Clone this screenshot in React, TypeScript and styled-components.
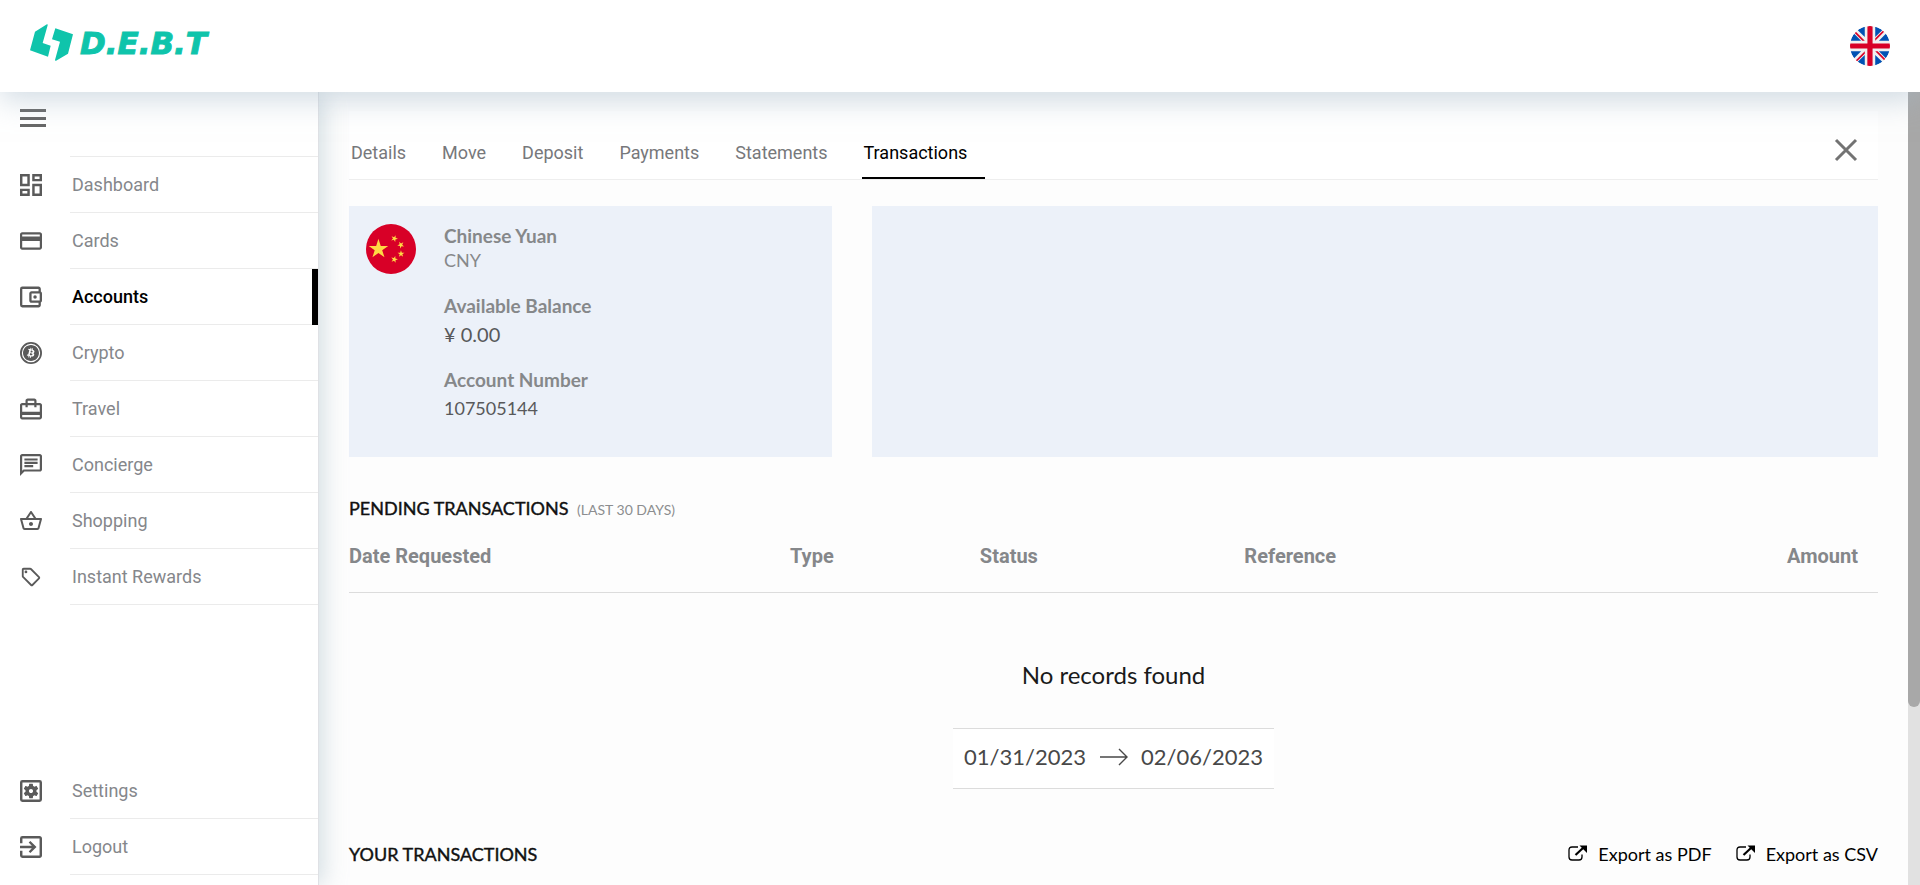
import React from 'react';
import styled, { createGlobalStyle, css } from 'styled-components';
import type { IconType } from 'react-icons';
import {
  MdOutlineDashboard,
  MdOutlineCreditCard,
  MdOutlineAccountBalanceWallet,
  MdCardTravel,
  MdOutlineChat,
  MdOutlineShoppingBasket,
  MdOutlineSell,
  MdOutlineSettingsApplications,
  MdExitToApp,
} from 'react-icons/md';
import { FaBitcoin } from 'react-icons/fa';

const GlobalStyle = createGlobalStyle`
  *, *::before, *::after { box-sizing: border-box; }
  body {
    margin: 0;
    background: #fdfdfd;
    font-family: Lato, "Liberation Sans", sans-serif;
    font-size: 18px;
    color: #111;
  }
  button, input { font: inherit; color: inherit; }
  a { color: inherit; text-decoration: none; }
`;

const roboto = css`font-family: Roboto, "Liberation Sans", sans-serif;`;

const Page = styled.div`
  display: flex;
  flex-direction: column;
  height: 100vh;
  overflow: hidden;
`;

const Header = styled.header`
  position: relative;
  z-index: 2;
  flex: none;
  display: flex;
  align-items: center;
  justify-content: space-between;
  height: 92px;
  padding: 0 30px;
  background: #fff;
  box-shadow: 0 8px 28px rgba(165, 186, 202, 0.5);
`;

const Brand = styled.a`
  display: flex;
  align-items: center;
  gap: 7px;
  padding-bottom: 8px;
  color: #0fc4ab;
`;

const BrandName = styled.span`
  padding-top: 2px;
  font: italic 700 31px/36px "DejaVu Sans", sans-serif;
  -webkit-text-stroke: 1px currentColor;
`;

const RoundButton = styled.button`
  display: block;
  width: 40px;
  height: 40px;
  padding: 0;
  border: 0;
  border-radius: 50%;
  background: none;
`;

const Body = styled.div`
  flex: 1;
  display: flex;
  min-height: 0;
`;

const Sidebar = styled.aside`
  position: relative;
  z-index: 1;
  flex: none;
  display: flex;
  flex-direction: column;
  width: 319px;
  padding-bottom: 10px;
  background: #fff;
  border-right: 1px solid #dfe1e5;
  box-shadow: 4px 0 22px rgba(160, 184, 196, 0.45);
`;

const MenuBar = styled.div`
  flex: none;
  height: 64px;
  padding: 17px 20px;
`;

const MenuButton = styled.button`
  display: flex;
  flex-direction: column;
  justify-content: space-between;
  width: 26px;
  height: 18px;
  padding: 0;
  border: 0;
  background: none;
`;

const MenuLine = styled.span`
  height: 3px;
  background: #666;
`;

const NavList = styled.ul<{ $topLine?: boolean }>`
  margin: 0;
  padding: 0;
  list-style: none;

  &::before {
    content: "";
    display: ${(p) => (p.$topLine ? 'block' : 'none')};
    height: 1px;
    margin-left: 70px;
    background: #ebebeb;
  }
`;

const Spacer = styled.div`flex: 1;`;

const NavLink = styled.a<{ $active?: boolean }>`
  ${roboto}
  display: flex;
  align-items: center;
  gap: 28px;
  height: 56px;
  padding-left: 20px;
  color: ${(p) => (p.$active ? '#000' : '#85878b')};
  font-weight: ${(p) => (p.$active ? 500 : 400)};
  border-right: ${(p) => (p.$active ? '6px solid #000' : '0')};

  svg { flex: none; width: 22px; height: 22px; color: #5a5a5a; }
`;

const NavLabel = styled.span`
  flex: 1;
  display: flex;
  align-items: center;
  height: 56px;
  padding-left: 2px;
  border-bottom: 1px solid #ebebeb;
`;

const Main = styled.main`
  flex: 1;
  min-width: 0;
  padding: 19px 30px 0;
  overflow: hidden;
`;

const TabBar = styled.nav`
  display: flex;
  align-items: stretch;
  gap: 32px;
  height: 69px;
  padding: 0 20px 0 0;
  background: #fff;
  border-bottom: 1px solid #eee;
`;

const Tab = styled.a<{ $active?: boolean }>`
  ${roboto}
  display: flex;
  align-items: flex-end;
  padding: 0 ${(p) => (p.$active ? '18px' : '2px')} 13px 2px;
  line-height: 22px;
  color: ${(p) => (p.$active ? '#000' : '#77787b')};
  border-bottom: 2px solid ${(p) => (p.$active ? '#000' : 'transparent')};
`;

const CloseButton = styled.button`
  align-self: center;
  display: block;
  width: 24px;
  height: 24px;
  margin: 10px 0 0 auto;
  padding: 0;
  border: 0;
  background: none;
`;

const Cards = styled.div`
  display: grid;
  grid-template-columns: 12fr 25fr;
  gap: 40px;
  margin-top: 26px;
`;

const Card = styled.section`
  display: flex;
  gap: 28px;
  min-height: 251px;
  padding: 17px;
  background: #ecf1f9;
`;

const FlagSlot = styled.div`
  flex: none;
  width: 50px;
  height: 50px;
  margin-top: 1px;
`;

const Facts = styled.dl`
  margin: 0;
  color: #86888a;
`;

const Fact = styled.div<{ $first?: boolean }>`
  margin-bottom: ${(p) => (p.$first ? 20 : 18)}px;
`;

const Term = styled.dt<{ $tight?: boolean }>`
  font-size: 19px;
  font-weight: 700;
  line-height: ${(p) => (p.$tight ? 25 : 28)}px;
`;

const Value = styled.dd<{ $dark?: boolean; $large?: boolean }>`
  margin: 0;
  font-size: ${(p) => (p.$large ? 20 : 18)}px;
  line-height: ${(p) => (p.$dark ? 28 : 24)}px;
  color: ${(p) => (p.$dark ? '#58595b' : '#86888a')};
`;

const SectionHead = styled.div`
  display: flex;
  align-items: center;
  justify-content: space-between;
`;

const SectionTitle = styled.h2`
  margin: 0;
  font-size: 18px;
  font-weight: 400;
  line-height: 22px;
  color: #111;
  -webkit-text-stroke: 0.4px currentColor;

  small { margin-left: 4px; font-size: 14px; color: #8c8d8f; -webkit-text-stroke: 0; }
`;

const PendingTitle = styled(SectionTitle)`
  margin-top: 40px;
`;

const Table = styled.table`
  ${roboto}
  width: 100%;
  table-layout: fixed;
  border-collapse: collapse;
  border-bottom: 1px solid #dcdcdc;
`;

const HeadCell = styled.th<{ $width?: string; $end?: boolean }>`
  width: ${(p) => p.$width ?? 'auto'};
  height: 71px;
  padding: 0 ${(p) => (p.$end ? '20px' : '0')} 0 0;
  text-align: ${(p) => (p.$end ? 'right' : 'left')};
  font-size: 20px;
  font-weight: 700;
  color: #85878a;
`;

const Empty = styled.p`
  margin: 67px 0 38px;
  text-align: center;
  font-size: 24px;
  line-height: 30px;
  color: #1a1a1a;
`;

const DateRange = styled.div`
  display: flex;
  align-items: center;
  justify-content: space-between;
  width: 321px;
  height: 61px;
  margin: 0 auto 54px;
  padding: 0 10px 3px;
  background: #fff;
  border: solid #dcdcdc;
  border-width: 1px 0;
`;

const DateInput = styled.input`
  width: 124px;
  padding: 0;
  border: 0;
  outline: 0;
  background: none;
  text-align: center;
  font-size: 22px;
  color: #484848;
`;

const ExportGroup = styled.div`
  display: flex;
  gap: 24px;
`;

const ExportButton = styled.button`
  display: flex;
  align-items: center;
  gap: 11px;
  padding: 0;
  border: 0;
  background: none;
  line-height: 22px;
  color: #000;
`;

const ScrollTrack = styled.div`
  flex: none;
  width: 12px;
  background: #e1e1e1;
`;

const ScrollThumb = styled.div`
  height: calc(77% + 4px);
  background: #a8a8a8;
  border-radius: 0 0 6px 6px;
`;

const LogoMark = () => (
  <svg width="43" height="37" viewBox="0 0 129 111" aria-hidden="true">
    <path fill="currentColor" d="M52 0 L53 4 L38 57 L62 65 L54 98 L0 79 L15 23 Z" />
    <path fill="currentColor" d="M76 13 L129 31 L114 89 L77 111 L75 108 L90 53 L66 46 Z" />
  </svg>
);

const UkFlag = () => (
  <svg width="40" height="40" viewBox="0 0 512 512" aria-hidden="true">
    <clipPath id="uk"><circle cx="256" cy="256" r="256" /></clipPath>
    <g clipPath="url(#uk)">
      <path fill="#f0f0f0" d="M0 0h512v512H0z" />
      <path fill="#0052b4" d="M53 100C33 126 18 156 9 189h133zM503 189c-9-33-24-63-44-89l-89 89zM9 323c9 33 24 63 44 89l89-89zM412 53C386 33 356 18 323 9v133zM100 459c26 20 56 35 89 44V370zM189 9c-33 9-63 24-89 44l89 89zM323 503c33-9 63-24 89-44l-89-89zM370 323l89 89c20-26 35-56 44-89z" />
      <path fill="#d80027" d="M510 223H289V2a258 258 0 0 0-66 0v221H2a258 258 0 0 0 0 66h220v221a258 258 0 0 0 67 0V289h221a258 258 0 0 0 0-66z" />
      <path fill="#d80027" d="M323 323l114 114c5-5 10-11 15-16l-98-98zM189 323L75 437c5 5 11 10 16 15l98-98zM189 189L75 75c-5 5-10 11-15 16l98 98zM323 189L437 75c-5-5-11-10-16-15l-98 98z" />
    </g>
  </svg>
);

const ChinaFlag = () => (
  <svg width="50" height="50" viewBox="0 0 512 512" role="img" aria-label="China">
    <circle cx="256" cy="256" r="256" fill="#d80027" />
    <g fill="#ffda44">
      <path d="M127 152l24 72h76l-61 45 23 72-62-45-61 45 23-72-61-45h76z" />
      <path d="M303.5 396.8l-16.9-20.8-25 9.7 14.5-22.5-16.9-20.9 25.9 6.9 14.6-22.5 1.4 26.8 26 6.9-25.1 9.6zM337.1 335.5l8.1-25.5-21.9-15.5 26.8-.4 7.9-25.6 8.7 25.4 26.8-.3-21.5 16 8.6 25.4-21.9-15.5zM382.4 187.9L370.6 212l19.2 18.7-26.5-3.8-11.8 24-4.6-26.4-26.6-3.8 23.8-12.5-4.6-26.5 19.2 18.7zM304.2 114.9l-2 26.8 24.9 10.1-26.1 6.4-1.9 26.8-14.1-22.8-26.1 6.4 17.3-20.5-14.2-22.7 24.9 10.1z" />
    </g>
  </svg>
);

const CryptoIcon = () => (
  <svg viewBox="0 0 24 24" aria-hidden="true">
    <circle cx="12" cy="12" r="11" fill="none" stroke="currentColor" strokeWidth="2" />
    <FaBitcoin x="3" y="3" style={{ width: 18, height: 18 }} />
  </svg>
);

const CloseIcon = () => (
  <svg width="24" height="24" viewBox="0 0 24 24" aria-hidden="true">
    <path d="M2 2l20 20M22 2L2 22" stroke="#737373" strokeWidth="3" />
  </svg>
);

const ArrowIcon = () => (
  <svg width="28" height="18" viewBox="0 0 28 18" aria-hidden="true">
    <path d="M0 9h27M19 1l8 8-8 8" fill="none" stroke="#484848" strokeWidth="1.4" />
  </svg>
);

const ExportIcon = () => (
  <svg width="19" height="17" viewBox="0 0 19 17" aria-hidden="true">
    <path d="M10 2H4Q1 2 1 5v7q0 3 3 3h7q3 0 3-3V9.5" fill="none" stroke="#000" strokeWidth="1.3" />
    <path d="M7.5 10L15 3" stroke="#000" strokeWidth="2.2" />
    <path d="M11.5.5H19V8z" />
  </svg>
);

type NavEntry = { label: string; icon: IconType | null; box?: string; active?: boolean };

const primary: NavEntry[] = [
  { label: 'Dashboard', icon: MdOutlineDashboard, box: '3 3 18 18' },
  { label: 'Cards', icon: MdOutlineCreditCard, box: '2 2 20 20' },
  { label: 'Accounts', icon: MdOutlineAccountBalanceWallet, box: '3 2.5 19 19', active: true },
  { label: 'Crypto', icon: null },
  { label: 'Travel', icon: MdCardTravel, box: '2 1.5 20 20' },
  { label: 'Concierge', icon: MdOutlineChat, box: '2 2 20 20' },
  { label: 'Shopping', icon: MdOutlineShoppingBasket, box: '1 1 22 22' },
  { label: 'Instant Rewards', icon: MdOutlineSell, box: '0 0 24 24' },
];

const secondary: NavEntry[] = [
  { label: 'Settings', icon: MdOutlineSettingsApplications, box: '3 3 18 18' },
  { label: 'Logout', icon: MdExitToApp, box: '3 3 18 18' },
];

const tabs = ['Details', 'Move', 'Deposit', 'Payments', 'Statements', 'Transactions'];

const NavItem = ({ entry }: { entry: NavEntry }) => {
  const Icon = entry.icon;
  return (
    <li>
      <NavLink href="#" $active={entry.active} aria-current={entry.active ? 'page' : undefined}>
        {Icon ? <Icon viewBox={entry.box} /> : <CryptoIcon />}
        <NavLabel>{entry.label}</NavLabel>
      </NavLink>
    </li>
  );
};

export default function App() {
  return (
    <Page>
      <GlobalStyle />
      <Header>
        <Brand href="#">
          <LogoMark />
          <BrandName>D.E.B.T</BrandName>
        </Brand>
        <RoundButton aria-label="Language: English"><UkFlag /></RoundButton>
      </Header>
      <Body>
        <Sidebar>
          <MenuBar>
            <MenuButton aria-label="Toggle menu"><MenuLine /><MenuLine /><MenuLine /></MenuButton>
          </MenuBar>
          <NavList $topLine>
            {primary.map((e) => <NavItem key={e.label} entry={e} />)}
          </NavList>
          <Spacer />
          <NavList>
            {secondary.map((e) => <NavItem key={e.label} entry={e} />)}
          </NavList>
        </Sidebar>
        <Main>
          <TabBar>
            {tabs.map((t) => (
              <Tab key={t} href="#" $active={t === 'Transactions'}>{t}</Tab>
            ))}
            <CloseButton aria-label="Close"><CloseIcon /></CloseButton>
          </TabBar>
          <Cards>
            <Card>
              <FlagSlot><ChinaFlag /></FlagSlot>
              <Facts>
                <Fact $first><Term $tight>Chinese Yuan</Term><Value>CNY</Value></Fact>
                <Fact><Term>Available Balance</Term><Value $dark $large>¥ 0.00</Value></Fact>
                <Fact><Term>Account Number</Term><Value $dark>107505144</Value></Fact>
              </Facts>
            </Card>
            <Card />
          </Cards>
          <PendingTitle>PENDING TRANSACTIONS <small>(LAST 30 DAYS)</small></PendingTitle>
          <Table>
            <thead>
              <tr>
                <HeadCell $width="28.84%">Date Requested</HeadCell>
                <HeadCell $width="12.42%">Type</HeadCell>
                <HeadCell $width="17.3%">Status</HeadCell>
                <HeadCell>Reference</HeadCell>
                <HeadCell $width="12%" $end>Amount</HeadCell>
              </tr>
            </thead>
          </Table>
          <Empty>No records found</Empty>
          <DateRange>
            <DateInput aria-label="Start date" defaultValue="01/31/2023" />
            <ArrowIcon />
            <DateInput aria-label="End date" defaultValue="02/06/2023" />
          </DateRange>
          <SectionHead>
            <SectionTitle>YOUR TRANSACTIONS</SectionTitle>
            <ExportGroup>
              <ExportButton><ExportIcon />Export as PDF</ExportButton>
              <ExportButton><ExportIcon />Export as CSV</ExportButton>
            </ExportGroup>
          </SectionHead>
        </Main>
        <ScrollTrack aria-hidden="true"><ScrollThumb /></ScrollTrack>
      </Body>
    </Page>
  );
}
